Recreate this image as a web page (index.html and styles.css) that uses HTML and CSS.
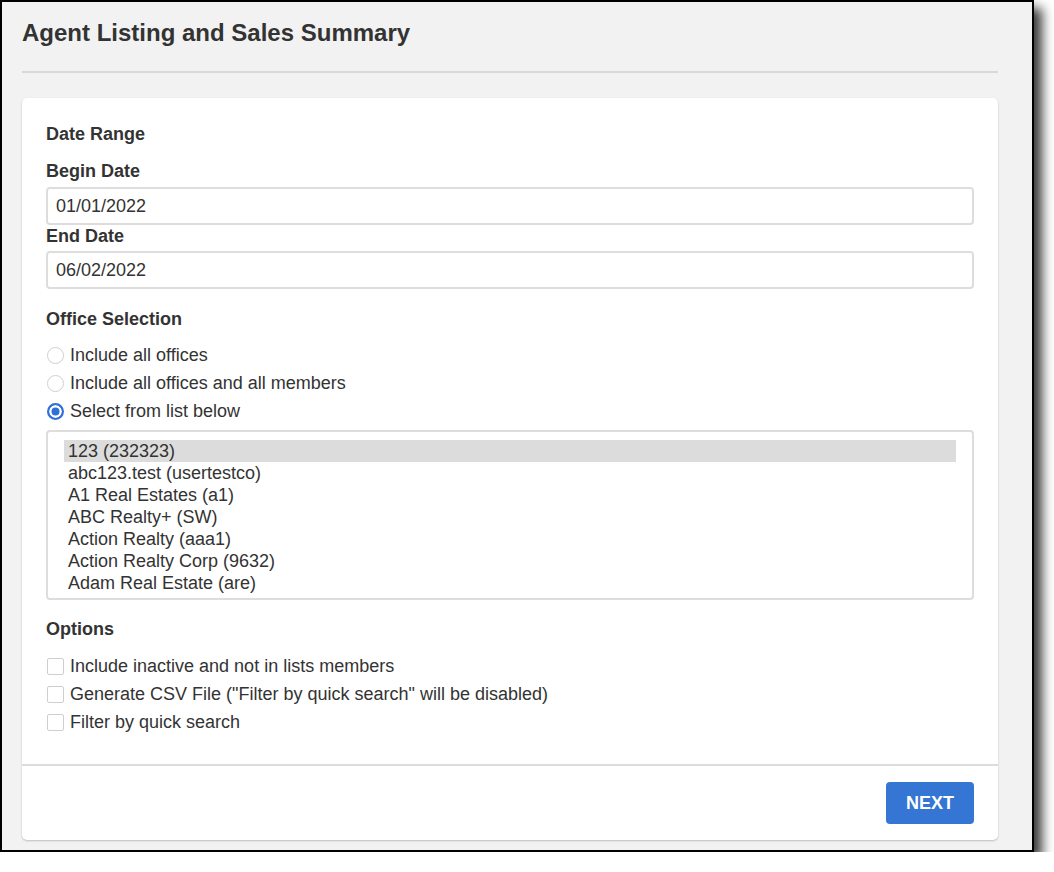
FILE: index.html
```html
<!DOCTYPE html>
<html lang="en">
<head>
<meta charset="utf-8">
<title>Agent Listing and Sales Summary</title>
<link rel="stylesheet" href="styles.css">
</head>
<body>
<div class="frame">
  <h1 class="page-title">Agent Listing and Sales Summary</h1>
  <hr class="rule">
  <div class="card">
    <div class="card-body">
      <div class="section-label">Date Range</div>
      <div class="field-label first">Begin Date</div>
      <div class="text-input">01/01/2022</div>
      <div class="field-label second">End Date</div>
      <div class="text-input">06/02/2022</div>

      <div class="section-label spaced">Office Selection</div>
      <div class="choices">
        <div class="choice"><span class="radio"></span><span>Include all offices</span></div>
        <div class="choice"><span class="radio"></span><span>Include all offices and all members</span></div>
        <div class="choice"><span class="radio checked"></span><span>Select from list below</span></div>
      </div>
      <div class="listbox">
        <div class="option selected">123 (232323)</div>
        <div class="option">abc123.test (usertestco)</div>
        <div class="option">A1 Real Estates (a1)</div>
        <div class="option">ABC Realty+ (SW)</div>
        <div class="option">Action Realty (aaa1)</div>
        <div class="option">Action Realty Corp (9632)</div>
        <div class="option">Adam Real Estate (are)</div>
      </div>

      <div class="section-label spaced-opt">Options</div>
      <div class="choices opts">
        <div class="choice"><span class="checkbox"></span><span>Include inactive and not in lists members</span></div>
        <div class="choice"><span class="checkbox"></span><span>Generate CSV File ("Filter by quick search" will be disabled)</span></div>
        <div class="choice"><span class="checkbox"></span><span>Filter by quick search</span></div>
      </div>
    </div>
    <div class="card-footer">
      <button class="btn-next" type="button">NEXT</button>
    </div>
  </div>
</div>
</body>
</html>
```

FILE: styles.css
```css
html, body {
  margin: 0;
  padding: 0;
  background: #ffffff;
}

body {
  font-family: "Liberation Sans", Arial, Helvetica, sans-serif;
  color: #333333;
}

.frame {
  box-sizing: border-box;
  width: 1034px;
  height: 852px;
  border: 2px solid #000000;
  background: #f2f2f2;
  padding: 17px 34px 0 20px;
  box-shadow: 8px 8px 11px rgba(0, 0, 0, 0.78);
}

.page-title {
  margin: 0;
  font-size: 24px;
  line-height: 28px;
  font-weight: bold;
  color: #333333;
}

.rule {
  margin: 24px 0 0 0;
  border: 0;
  height: 2px;
  background: #d9d9d9;
}

.card {
  margin-top: 25px;
  background: #ffffff;
  border-radius: 5px;
  box-shadow: 0 1px 2px rgba(0, 0, 0, 0.22);
}

.card-body {
  padding: 25px 24px 28px 24px;
  font-size: 18px;
  line-height: 22px;
}

.section-label,
.field-label {
  font-weight: bold;
  font-size: 18px;
  line-height: 22px;
  color: #333333;
}

.field-label {
  margin-bottom: 5px;
}

.field-label.first {
  margin-top: 15px;
}

.field-label.second {
  margin-bottom: 4px;
}

.section-label.spaced {
  margin-top: 19px;
}

.section-label.spaced-opt {
  margin-top: 18px;
}

.text-input {
  box-sizing: border-box;
  height: 38px;
  border: 2px solid #dddddd;
  border-radius: 4px;
  padding: 0 8px;
  display: flex;
  align-items: center;
  font-size: 18px;
  color: #333333;
}

.choices {
  margin-top: 11px;
}

.choices.opts {
  margin-top: 12px;
}

.choice {
  display: flex;
  align-items: center;
  height: 28px;
  gap: 6px;
  font-size: 18px;
}

.radio {
  box-sizing: border-box;
  flex: none;
  width: 17px;
  height: 17px;
  margin-left: 1px;
  border: 1.5px solid #cfcfcf;
  border-radius: 50%;
  background: #ffffff;
}

.radio.checked {
  border: 2px solid #2f6fd6;
  background: #2f6fd6;
  box-shadow: inset 0 0 0 2.5px #ffffff;
}

.checkbox {
  box-sizing: border-box;
  flex: none;
  width: 17px;
  height: 17px;
  margin-left: 1px;
  border: 1.5px solid #cfcfcf;
  border-radius: 2px;
  background: #ffffff;
}

.listbox {
  box-sizing: border-box;
  margin-top: 5px;
  height: 170px;
  border: 2px solid #dddddd;
  border-radius: 4px;
  padding: 8px 16px 4px 16px;
}

.option {
  height: 22px;
  line-height: 22px;
  padding-left: 4px;
  font-size: 18px;
  color: #333333;
  white-space: nowrap;
}

.option.selected {
  background: #dcdcdc;
}

.card-footer {
  border-top: 2px solid #dcdcdc;
  padding: 16px 24px;
  display: flex;
  justify-content: flex-end;
}

.btn-next {
  width: 88px;
  height: 42px;
  border: 0;
  border-radius: 4px;
  background: #3575d3;
  color: #ffffff;
  font-family: "Liberation Sans", Arial, Helvetica, sans-serif;
  font-size: 18px;
  font-weight: bold;
  padding: 0;
}
```
